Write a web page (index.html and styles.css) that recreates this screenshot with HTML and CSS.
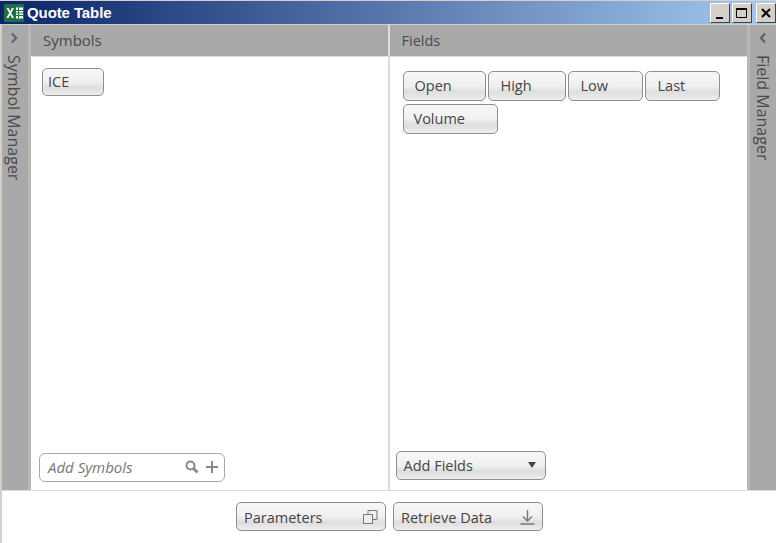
FILE: index.html
```html
<!DOCTYPE html>
<html lang="en">
<head>
<meta charset="utf-8">
<title>Quote Table</title>
<link rel="stylesheet" href="styles.css">
</head>
<body>
<div class="window">
  <header class="titlebar">
    <svg class="xl" width="20" height="18" viewBox="0 0 20 18">
      <rect width="20" height="18" rx="1" fill="#1e7145"/>
      <path d="M12 3.500h7v11h-7z" fill="#fff"/>
      <path d="M14.500 3.500v11M12 6.500h7M12 9h7M12 11.500h7" stroke="#1e7145" fill="none"/>
      <path d="M2.500 4h2l1.700 3.200L7.900 4h2L7.200 9l2.800 5H8L6.200 10.700 4.400 14h-2l2.800-5z" fill="#fff"/>
    </svg>
    <span class="title">Quote Table</span>
    <div class="winbtns">
      <button class="winbtn"><svg width="12" height="12" viewBox="0 0 12 12"><path d="M2 10h7v2H2z" fill="#000"/></svg></button>
      <button class="winbtn"><svg width="14" height="14" viewBox="0 0 14 14"><path d="M1.500 2.500h10v9h-10z" fill="none" stroke="#000"/><path d="M1 2h11v2H1z" fill="#000"/></svg></button>
      <button class="winbtn gap"><svg width="12" height="12" viewBox="0 0 12 12"><path d="M2 2l8 8M10 2l-8 8" stroke="#000" stroke-width="2"/></svg></button>
    </div>
  </header>
  <main class="main">
    <aside class="rail rail-left">
      <svg class="chev" width="8" height="12" viewBox="0 0 8 12"><path d="M2 1.500L6 6l-4 4.500" fill="none" stroke="#666" stroke-width="2.400"/></svg>
      <span class="rail-label">Symbol Manager</span>
    </aside>
    <section class="panel panel-symbols">
      <div class="panel-head">Symbols</div>
      <div class="panel-body body-symbols">
        <div class="chips chips-symbols"><button class="btn chip-ice">ICE</button></div>
        <div class="search">
          <span class="search-text">Add Symbols</span>
          <svg width="16" height="16" viewBox="0 0 16 16"><circle cx="6.500" cy="6.500" r="4" fill="none" stroke="#888" stroke-width="2"/><path d="M9.500 9.500l4 4" stroke="#888" stroke-width="2.600"/></svg>
          <svg class="plus" width="12" height="12" viewBox="0 0 12 12"><path d="M6 0v12M0 6h12" stroke="#888" stroke-width="2"/></svg>
        </div>
      </div>
    </section>
    <section class="panel panel-fields">
      <div class="panel-head">Fields</div>
      <div class="panel-body body-fields">
        <div class="chips">
          <button class="btn field f-open">Open</button>
          <button class="btn field f-high">High</button>
          <button class="btn field f-low">Low</button>
          <button class="btn field f-last">Last</button>
          <button class="btn field f-volume">Volume</button>
        </div>
        <button class="btn wide add-fields"><span>Add Fields</span><svg width="8" height="6" viewBox="0 0 8 6"><path d="M0 0h8L4 6z" fill="#444"/></svg></button>
      </div>
    </section>
    <aside class="rail rail-right">
      <svg class="chev" width="8" height="12" viewBox="0 0 8 12"><path d="M6 1.500L2 6l4 4.500" fill="none" stroke="#666" stroke-width="2.400"/></svg>
      <span class="rail-label">Field Manager</span>
    </aside>
  </main>
  <footer class="footer">
    <button class="btn wide btn-foot"><span>Parameters</span><svg class="ico-params" width="16" height="16" viewBox="0 0 16 16"><path d="M6 1.500h9v9H6z" fill="none" stroke="#777"/><path d="M1.500 5.500h9v9h-9z" fill="#eee" stroke="#777"/></svg></button>
    <button class="btn wide btn-foot"><span>Retrieve Data</span><svg class="ico-get" width="15" height="16" viewBox="0 0 15 16"><path d="M7.500 1v11M3 7.500L7.500 12 12 7.500M.5 15h14" fill="none" stroke="#777" stroke-width="1.400"/></svg></button>
  </footer>
</div>
</body>
</html>
```
FILE: styles.css
```css
* { box-sizing: border-box; }
html, body { margin: 0; padding: 0; }
body { width: 776px; height: 543px; overflow: hidden; background: #fff; font-family: "Open Sans", "Noto Sans", sans-serif; color: #444; }
.window { display: flex; flex-direction: column; width: 776px; height: 543px; border-left: 2px solid #d4d0c8; }

.titlebar { display: flex; align-items: center; height: 25px; margin-left: -2px; padding-top: 0; border-top: 1px solid #d4d0c8; border-bottom: 1px solid #d4d0c8; background: linear-gradient(90deg, #0a246a, #a6caf0); color: #fff; }
.xl { margin-left: 4px; flex: none; }
.title { margin-left: 3px; font-family: "Liberation Sans", sans-serif; font-weight: 700; font-size: 15px; letter-spacing: -0.1px; }
.winbtns { display: flex; margin-left: auto; }
.winbtn { display: flex; align-items: center; justify-content: center; width: 20px; height: 20px; padding: 0; margin: 0 0 0 2px; background: #d4d0c8; border: 1px solid; border-color: #fff #404040 #404040 #fff; }
.winbtn.gap { margin-left: 4px; margin-right: 0; }

.main { flex: none; display: flex; height: 465px; background: #a9a9a9; }
.rail { flex: none; display: flex; flex-direction: column; align-items: center; width: 29px; padding-top: 7px; color: #4a4a4a; }
.rail-left { border-right: 3px solid #b8b8b8; padding-right: 2px; width: 29px; }
.rail-right { border-left: 3px solid #b8b8b8; width: 29px; }
.chev { flex: none; }
.rail-label { margin-top: 11px; writing-mode: vertical-rl; font-size: 16px; line-height: 20px; }

.panel { display: flex; flex-direction: column; min-width: 0; }
.panel-symbols { width: 359px; border-right: 2px solid #dcdcdc; }
.panel-fields { width: 358px; }
.panel-head { flex: none; height: 32px; padding: 6px 0 0 12px; font-size: 15px; line-height: 19px; color: #4a4a4a; border-bottom: 1px solid #dcdcdc; }
.panel-body { flex: 1; display: flex; flex-direction: column; justify-content: space-between; background: #fff; }
.body-symbols { padding: 11px 0 8px 8px; }
.body-fields { padding: 14px 0 10px 6px; }
.panel-fields .panel-head { padding-left: 12px; font-size: 14.500px; }
.panel-symbols .panel-head { margin-right: -2px; }
.chips { display: flex; flex-wrap: wrap; gap: 3px 2px; padding-left: 7px; }
.chips-symbols { padding-left: 3px; }

.btn { display: flex; align-items: center; height: 30px; padding: 0 0 1px 12px; border: 1px solid #8f8f8f; border-radius: 5px; background: linear-gradient(#f7f7f7 0%, #f0f0f0 50%, #dedede 72%, #eeeeee 100%); font: 14.500px/19px "Open Sans", "Noto Sans", sans-serif; color: #444; }
.chip-ice { width: 62px; height: 28px; padding-left: 5px; }
.f-open { width: 83px; padding-left: 11px; }
.f-high { width: 78px; }
.f-low { width: 75px; }
.f-last { width: 75px; }
.f-volume { width: 95px; padding-left: 10px; }
.wide { width: 150px; justify-content: space-between; padding: 0 6px 1px 7px; height: 29px; }
.btn-foot { padding-bottom: 0; padding-top: 1px; }
.add-fields { margin-top: auto; padding-right: 9px; }
.ico-params { margin-right: 1px; }
.ico-get { margin-right: 1px; }

.search { display: flex; align-items: center; width: 186px; height: 29px; padding: 0 6px 2px 8px; border: 1px solid #a8a8a8; border-radius: 6px; background: #fff; }
.search-text { flex: 1; font-size: 15px; font-style: italic; color: #777; }
.plus { margin-left: 6px; }

.footer { flex: 1; display: flex; justify-content: center; gap: 7px; padding: 11px 0 0 1px; background: #fff; border-top: 1px solid #dcdcdc; margin-left: 0; }
```
